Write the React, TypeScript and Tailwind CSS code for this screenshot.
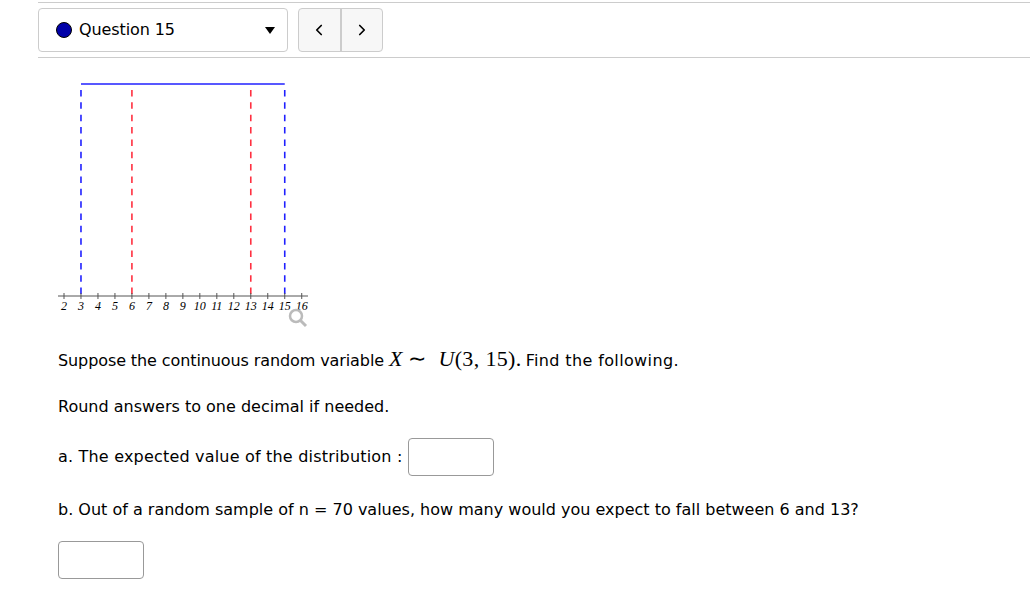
import { ChevronLeft, ChevronRight } from 'lucide-react';

const ticks = [2, 3, 4, 5, 6, 7, 8, 9, 10, 11, 12, 13, 14, 15, 16];
const tickX = (n: number) => 64 + (n - 2) * 16.98;

function Graph() {
  return (
    <svg width="280" height="270" viewBox="38 60 280 270" className="mt-[2px] block">
      <line x1={tickX(3)} x2={tickX(15)} y1="84" y2="84" stroke="#2020ff" strokeWidth="1.6" />
      {[3, 15].map((n) => (
        <line key={n} x1={tickX(n)} x2={tickX(n)} y1="90" y2="296" stroke="#2020ff" strokeWidth="1.6" strokeDasharray="6.5 5.85" />
      ))}
      {[6, 13].map((n) => (
        <line key={n} x1={tickX(n)} x2={tickX(n)} y1="90" y2="296" stroke="#ff3040" strokeWidth="1.6" strokeDasharray="6.5 5.85" />
      ))}
      <line x1="58" x2="308" y1="296" y2="296" stroke="#555" strokeWidth="1" />
      {ticks.map((n) => (
        <g key={n}>
          <line x1={tickX(n)} x2={tickX(n)} y1="293" y2="299" stroke="#555" strokeWidth="1" />
          <text
            x={tickX(n)}
            y="310"
            textAnchor="middle"
            fontSize="12"
            fontStyle="italic"
            fontFamily="'Liberation Serif', serif"
            fill="#000"
          >
            {n}
          </text>
        </g>
      ))}
      <circle cx="296" cy="316" r="6" fill="none" stroke="#bbb" strokeWidth="2.5" />
      <line x1="300" y1="320" x2="306" y2="326" stroke="#bbb" strokeWidth="3" />
    </svg>
  );
}

function AnswerBox() {
  return <span className="inline-block h-[38px] w-[86px] rounded-[4px] border border-[#999] bg-white align-middle" />;
}

export default function App() {
  return (
    <div className="min-h-[599px] bg-white pl-[38px] pt-[2px] text-[16px] text-black [font-family:'DejaVu_Sans',sans-serif]">
      {/* Question nav */}
      <div className="flex h-[56px] items-center gap-[10px] border-y border-[#ccc]">
        <div className="flex h-[44px] w-[250px] items-center rounded-[4px] border border-[#ccc] pl-[17px] pr-[12px]">
          <span className="h-[16px] w-[16px] rounded-full border border-black bg-[#0000a8]" />
          <span className="ml-[7px] flex-1 tracking-[-0.1px]">Question 15</span>
          <span className="h-0 w-0 border-x-[5px] border-t-[7px] border-x-transparent border-t-black" />
        </div>
        <div className="flex h-[44px] w-[85px] rounded-[4px] border border-[#ccc] bg-[#f7f7f7]">
          <div className="flex flex-1 items-center justify-center border-r-2 border-[#ccc]">
            <ChevronLeft size={18} strokeWidth={2.25} />
          </div>
          <div className="flex flex-1 items-center justify-center">
            <ChevronRight size={18} strokeWidth={2.25} />
          </div>
        </div>
      </div>

      <Graph />

      <div className="pl-[20px]">
        <p className="mt-[9px] flex h-[40px] items-baseline leading-[40px]">
          <span className="tracking-[-0.1px]">Suppose the continuous random variable&nbsp;</span>
          <span className="flex items-baseline text-[22px] [font-family:'Liberation_Serif',serif]">
            <i>X</i>
            <span className="ml-[6px] w-[30px]">∼</span>
            <span className="tracking-[0.35px]">
              <i>U</i>(3, 15).
            </span>
          </span>
          <span className="ml-[4px] tracking-[0.37px]">Find the following.</span>
        </p>
        <p className="mt-[8px] h-[40px] leading-[40px]">Round answers to one decimal if needed.</p>
        <p className="mt-[11px] flex items-center gap-[6px]">
          <span className="tracking-[0.19px]">a. The expected value of the distribution :</span>
          <AnswerBox />
        </p>
        <p className="mt-[22px]">b. Out of a random sample of n = 70 values, how many would you expect to fall between 6 and 13?</p>
        <p className="mt-[19px]">
          <AnswerBox />
        </p>
      </div>
    </div>
  );
}
